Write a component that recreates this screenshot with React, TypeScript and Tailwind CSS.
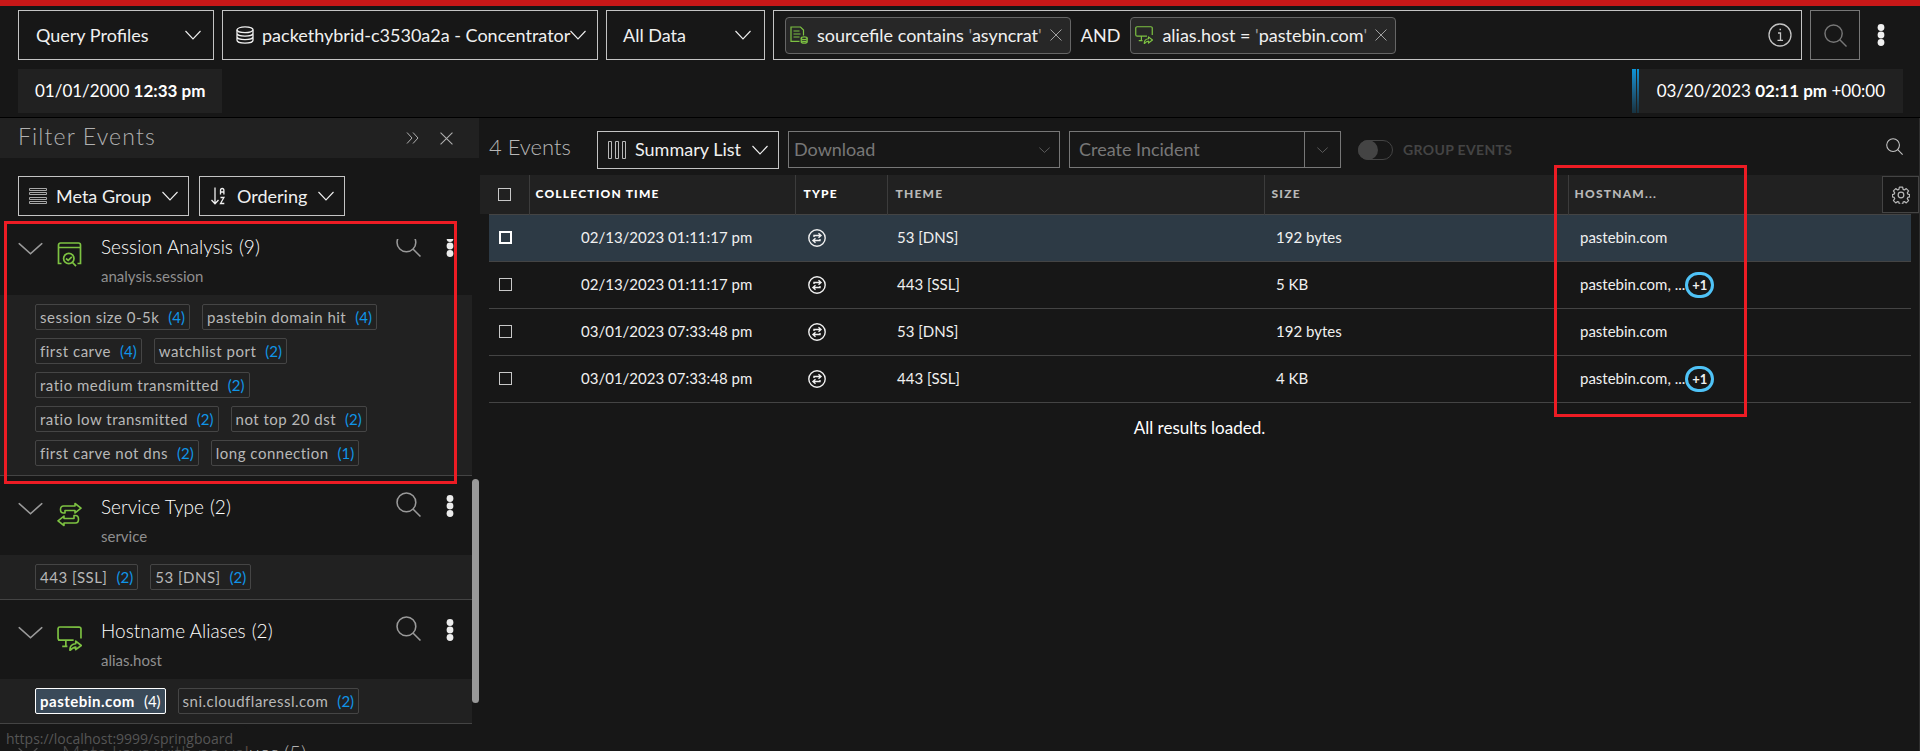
import type { ReactNode } from "react";

type IconProps = { className?: string };

const Chevron = ({ className = "w-4 h-[10px]" }: IconProps) => (
  <svg viewBox="0 0 16 10" preserveAspectRatio="none" className={`shrink-0 ${className}`} fill="none" stroke="currentColor" strokeWidth="1.1">
    <path d="M.5 1l7.500 8 7.500-8" />
  </svg>
);

const Close = ({ className = "w-3 h-3" }: IconProps) => (
  <svg viewBox="0 0 12 12" className={className} fill="none" stroke="currentColor" strokeWidth="1">
    <path d="M.5.5l11 11M11.5.5l-11 11" />
  </svg>
);

const Search = ({ className = "w-6 h-6" }: IconProps) => (
  <svg viewBox="0 0 24 24" className={className} fill="none" stroke="currentColor" strokeWidth="1.5">
    <circle cx="10" cy="10" r="9" />
    <path d="M16.5 16.5l7 7" />
  </svg>
);

const Dots = () => (
  <svg viewBox="0 0 8 22" className="w-2 h-[22px]" fill="currentColor">
    <circle cx="4" cy="3.5" r="3.4" />
    <circle cx="4" cy="11" r="3.4" />
    <circle cx="4" cy="18.5" r="3.4" />
  </svg>
);

const Database = () => (
  <svg viewBox="0 0 18 18" className="w-[18px] h-[18px] shrink-0" fill="none" stroke="currentColor" strokeWidth="1.3">
    <ellipse cx="9" cy="3.8" rx="8" ry="2.9" />
    <path d="M1 3.8v10.400c0 1.600 3.600 2.900 8 2.900s8-1.300 8-2.900V3.800M1 7.300c0 1.600 3.600 2.900 8 2.900s8-1.300 8-2.900M1 10.800c0 1.600 3.600 2.900 8 2.900s8-1.300 8-2.900" />
  </svg>
);

const SourceFile = () => (
  <svg viewBox="0 0 18 18" className="w-[18px] h-[18px]" fill="none" stroke="currentColor" strokeWidth="1.2">
    <path d="M9.500 15.400H1V1h9.500l3 3v5.500M3.500 5h6M3.500 8h7M3.500 11h6" />
    <ellipse cx="14.200" cy="12.200" rx="3" ry="1.300" />
    <path d="M11.200 12.200v3.600c0 .8 1.300 1.400 3 1.400s3-.6 3-1.400v-3.600M11.200 14.200c0 .7 1.300 1.200 3 1.200s3-.5 3-1.200" />
  </svg>
);

const HostAlias = ({ className = "w-[18px] h-[18px]" }: IconProps) => (
  <svg viewBox="0 0 24 24" className={className} fill="none" stroke="currentColor" strokeWidth="1.600" strokeLinejoin="round">
    <path d="M16 13.500H3a2 2 0 0 1-2-2V2.500A1.700 1.700 0 0 1 2.700 1h18.600A1.700 1.700 0 0 1 23 2.700v9.300M1 13.500h15M8.500 13.500v5.500M5 19.500h5" />
    <path d="M12.500 23.500c-.5-4 2-6.500 5.500-6.500v-2.500l5.300 4.200-5.300 4v-2.500c-2.500 0-3.500 1-5.500 3.300z" />
  </svg>
);

const SessionIcon = () => (
  <svg viewBox="0 0 25 25" className="w-[25px] h-[25px]" fill="none" stroke="currentColor" strokeWidth="1.700">
    <path d="M4.500 21.500H1.500V3A2 2 0 0 1 3.500 1h18A2 2 0 0 1 23.500 3v18.500h-3M1.500 5.500h22" />
    <circle cx="11.800" cy="16.500" r="5.200" />
    <path d="M15.500 20.500l3.500 3.700M9 16.500l2.200 1.900 3.600-3.600" />
  </svg>
);

const ServiceIcon = () => (
  <svg viewBox="0 0 25 25" className="w-[25px] h-[25px]" fill="none" stroke="currentColor" strokeWidth="1.600" strokeLinejoin="round">
    <path d="M8 11H6.500C2.500 11 2.500 4 6.500 4H18V1.500l6 4.700-6 4.700V8.500H8z" />
    <path d="M17 13.500h1.500c4 0 4 7.500 0 7.500H7v2.500l-6-4.700 6-4.700v2.400h10z" />
  </svg>
);

const NetworkEvent = () => (
  <svg viewBox="0 0 18 18" className="w-[18px] h-[18px]" fill="none" stroke="currentColor" strokeWidth="1.400">
    <circle cx="9" cy="9" r="8.200" />
    <path d="M6 8V6.500h6M10.500 4.300l2.500 2.200-2.500 2.200M12 10v1.500H6M7.500 9.300L5 11.500l2.500 2.200" strokeWidth="1.400" />
  </svg>
);

const Gear = () => (
  <svg viewBox="0 0 24 24" className="w-[18px] h-[18px]" fill="none" stroke="currentColor" strokeWidth="1.600" strokeLinejoin="round">
    <circle cx="12" cy="12" r="3.800" />
    <path d="M9.800 1.500h4.400l.6 3 1.600.7 2.600-1.700 3.100 3.100-1.700 2.600.7 1.600 2.400.6v3.200l-2.400.6-.7 1.600 1.700 2.600-3.100 3.100-2.600-1.700-1.600.7-.6 3H9.800l-.6-3-1.600-.7L5 22.500l-3.100-3.100 1.700-2.600-.7-1.600-2.400-.6v-3.200l2.400-.6.7-1.600L1.900 6.600 5 3.500l2.600 1.700 1.600-.7z" />
  </svg>
);

const groups = [
  {
    title: "Session Analysis",
    key: "analysis.session",
    icon: <SessionIcon />,
    values: [
      ["session size 0-5k", 4],
      ["pastebin domain hit", 4],
      ["first carve", 4],
      ["watchlist port", 2],
      ["ratio medium transmitted", 2],
      ["ratio low transmitted", 2],
      ["not top 20 dst", 2],
      ["first carve not dns", 2],
      ["long connection", 1],
    ],
    total: 9,
  },
  {
    title: "Service Type",
    key: "service",
    icon: <ServiceIcon />,
    values: [
      ["443 [SSL]", 2],
      ["53 [DNS]", 2],
    ],
    total: 2,
  },
  {
    title: "Hostname Aliases",
    key: "alias.host",
    icon: <HostAlias className="w-[25px] h-[25px]" />,
    values: [
      ["pastebin.com", 4],
      ["sni.cloudflaressl.com", 2],
    ],
    total: 2,
    selected: "pastebin.com",
  },
];

const events = [
  { time: "02/13/2023 01:11:17 pm", theme: "53 [DNS]", size: "192 bytes", more: false },
  { time: "02/13/2023 01:11:17 pm", theme: "443 [SSL]", size: "5 KB", more: true },
  { time: "03/01/2023 07:33:48 pm", theme: "53 [DNS]", size: "192 bytes", more: false },
  { time: "03/01/2023 07:33:48 pm", theme: "443 [SSL]", size: "4 KB", more: true },
];

const Check = ({ label, bright }: { label: string; bright?: boolean }) => (
  <input
    type="checkbox"
    aria-label={label}
    className={`block appearance-none w-[13px] h-[13px] ${bright ? "border-2 border-white" : "border border-[#c8c8c8]"}`}
  />
);

const Pill = ({ icon, children }: { icon: ReactNode; children: ReactNode }) => (
  <div className="flex items-center h-[37px] pl-1 pr-2 rounded border border-[#666] bg-[#272727] whitespace-nowrap">
    <span className="text-[#7dc242]">{icon}</span>
    <span className="ml-[9px]">{children}</span>
    <button aria-label="Remove filter" className="ml-2 text-[#a0a0a0]">
      <Close />
    </button>
  </div>
);

function QueryBar() {
  return (
    <header className="border-t-6 border-[#c81818] pl-[18px]">
      <div className="flex items-center gap-2 pt-1 whitespace-nowrap">
        <button className="flex items-center justify-between w-[196px] h-[50px] pl-[17px] pr-3 border border-[#c4c4c4]">
          Query Profiles
          <Chevron />
        </button>
        <button className="flex items-center w-[376px] h-[50px] pl-[13px] pr-[13px] border border-[#c4c4c4]">
          <Database />
          <span className="ml-2 mr-auto">packethybrid-c3530a2a - Concentrator</span>
          <Chevron />
        </button>
        <button className="flex items-center justify-between w-[159px] h-[50px] pl-4 pr-[13px] border border-[#c4c4c4]">
          All Data
          <Chevron />
        </button>
        <div className="flex flex-1 items-center h-[50px] pl-[11px] pr-[9px] border border-[#c4c4c4]">
          <Pill icon={<SourceFile />}>sourcefile contains <i className="not-italic text-[#999]">'</i>asyncrat<i className="not-italic text-[#999]">'</i></Pill>
          <span className="mx-[10px]">AND</span>
          <Pill icon={<HostAlias />}>alias.host = <i className="not-italic text-[#999]">'</i>pastebin.com<i className="not-italic text-[#999]">'</i></Pill>
          <button aria-label="Query info" className="ml-auto text-[#c4c4c4]">
            <svg viewBox="0 0 24 24" className="w-6 h-6" fill="none" stroke="currentColor" strokeWidth="1.300">
              <circle cx="12" cy="12" r="11" />
              <path d="M10 10h2.500v7M9.500 17.300h5.500M11.500 6.500h1.500" />
            </svg>
          </button>
        </div>
        <button aria-label="Run query" className="flex items-center justify-center w-[50px] h-[50px] border border-[#777] text-[#777]">
          <Search className="w-[23px] h-[23px]" />
        </button>
        <button aria-label="More" className="w-[52px] flex justify-center pr-[26px]">
          <Dots />
        </button>
      </div>
      <div className="flex justify-between pt-[9px] pr-[17px] pb-1 text-[17px] text-white">
        <div className="flex items-center h-[44px] px-[17px] bg-[#212121]">
          <span>01/01/2000 <b>12:33 pm</b></span>
        </div>
        <div className="flex items-center h-[44px] pr-[18px] bg-[#212121]">
          <div className="w-1 h-full bg-linear-to-b from-[#0a94d8] to-[#173240]" />
          <div className="w-[2px] h-full ml-px mr-[18px] bg-linear-to-b from-[#0a94d8] to-[#173240]" />
          <span>03/20/2023 <b>02:11 pm</b> +00:00</span>
        </div>
      </div>
    </header>
  );
}

function MetaGroup({ group }: { group: (typeof groups)[number] }) {
  return (
    <section className="border-b border-[#444]">
      <div className="flex h-[79px] pl-[18px] pr-[18px]">
        <button aria-label="Collapse" className="self-start mt-[26px] text-[#9a9a9a]">
          <Chevron className="w-[25px] h-[13px]" />
        </button>
        <span className="mt-[26px] ml-[14px] text-[#7dc242]">{group.icon}</span>
        <div className="ml-[19px] mt-[18px]">
          <h2 className="flex gap-[6px] text-[19px] leading-[26px] font-light text-white">
            {group.title}
            <span>({group.total})</span>
          </h2>
          <p className="mt-[6px] text-[15px] leading-5 text-[#8f8f8f]">{group.key}</p>
        </div>
        <button aria-label={"Search " + group.title} className="self-start mt-4 ml-auto text-[#9a9a9a]">
          <Search className="w-[25px] h-[25px]" />
        </button>
        <button aria-label="Options" className="self-start mt-[19px] ml-[25px] text-[#ececec]">
          <Dots />
        </button>
      </div>
      <div className="flex flex-wrap gap-x-3 gap-y-2 py-[9px] pl-[35px] pr-9 bg-[#212121]">
        {group.values.map(([name, count]) => {
          const active = group.selected === name;
          return (
            <button
              key={name}
              className={`flex items-center gap-[9px] h-[26px] px-1 rounded-[2px] border text-[15px] tracking-[0.5px] ${
                active ? "border-white bg-[#3a4a59] text-white font-bold" : "border-[#454545] text-[#b8b8b8]"
              }`}
            >
              {name}
              <span className={active ? "font-normal tracking-normal" : "text-[#1095e8] tracking-normal"}>({count})</span>
            </button>
          );
        })}
      </div>
    </section>
  );
}

function FilterPanel() {
  return (
    <aside className="relative flex flex-col w-[480px] shrink-0 min-h-0">
      <div className="flex items-center h-10 w-[479px] pl-[18px] pr-[26px] bg-[#212121] text-[#b0b0b0]">
        <h1 className="text-[23px] leading-9 pb-1 font-light tracking-wider">Filter Events</h1>
        <button aria-label="Expand panel" className="ml-auto">
          <svg viewBox="0 0 13 12" className="w-[13px] h-3" fill="none" stroke="currentColor">
            <path d="M1 .5L6 6l-5 5.500M7 .5L12 6l-5 5.500" />
          </svg>
        </button>
        <button aria-label="Close panel" className="ml-[21px]">
          <Close className="w-[13px] h-[13px]" />
        </button>
      </div>
      <div className="flex gap-[10px] pt-[18px] pl-[18px] pb-[23px]">
        <button className="flex items-center w-[171px] h-10 px-[10px] border border-[#c4c4c4]">
          <svg viewBox="0 0 18 18" className="w-[18px] h-[18px]" fill="none" stroke="#a8a8a8">
            <path d="M.5 1.500h17v2H.5zM.5 5.500h17v2H.5zM.5 10.500h17v2H.5zM.5 14.500h17v2H.5z" />
          </svg>
          <span className="ml-[9px] mr-auto">Meta Group</span>
          <Chevron />
        </button>
        <button className="flex items-center w-[146px] h-10 px-[10px] border border-[#c4c4c4]">
          <svg viewBox="0 0 18 18" className="w-[18px] h-[18px]" fill="none" stroke="currentColor" strokeWidth="1.300">
            <path d="M5 .5v16M1.500 13L5 16.700 8.500 13M10.500 7.500V3.500q0-2 1.700-2t1.700 2v4M10.500 5h3.400M10.500 10.500h3.400l-3.400 6h3.800" />
          </svg>
          <span className="ml-[9px] mr-auto">Ordering</span>
          <Chevron />
        </button>
      </div>
      <div className="flex-1 min-h-0 overflow-hidden w-[472px]">
        {/* list is scrolled a little, first header is cut */}
        <div className="-mt-[23px]">
          {groups.map((g) => (
            <MetaGroup key={g.key} group={g} />
          ))}
          <div className="flex items-center gap-6 pt-3 pl-[18px] text-[20px] leading-8 font-light text-[#b0b0b0]">
            <Chevron className="w-5 h-[11px]" />
            Meta keys with no values (5)
          </div>
        </div>
      </div>
      <div className="absolute right-px top-[361px] w-[7px] h-[224px] rounded bg-[#999]" />
      <a href="https://localhost:9999/springboard" className="absolute left-0 bottom-0 h-[25px] w-[247px] pl-[6px] rounded-tr bg-[#181818a0] font-['Open_Sans',sans-serif] text-sm leading-[25px] text-[#555]">
        https://localhost:9999/springboard
      </a>
      {/* session highlight */}
      <div className="absolute pointer-events-none left-1 top-[103px] w-[453px] h-[263px] border-3 border-[#ed1c24]" />
    </aside>
  );
}

function EventsTable() {
  const thText = "text-left text-[12px] font-black tracking-widest";
  const th = `${thText} border-r border-[#3c3c3c]`;
  return (
    <div className="relative">
      <table className="w-full table-fixed border-collapse">
        <colgroup>
          <col className="w-[9px]" />
          <col className="w-[40px]" />
          <col className="w-[266px]" />
          <col className="w-[92px]" />
          <col className="w-[377px]" />
          <col className="w-[304px]" />
          <col />
          <col className="w-[8px]" />
        </colgroup>
        <thead>
          <tr className="h-[39px] bg-[#212121] text-[#b8b8b8]">
            <td />
            <th className={`${th} pl-[9px]`}><Check label="Select all events" /></th>
            <th className={`${th} pl-[6px] text-white`}>COLLECTION TIME</th>
            <th className={`${th} pl-2 text-white`}>TYPE</th>
            <th className={`${th} pl-2`}>THEME</th>
            <th className={`${th} pl-[7px]`}>SIZE</th>
            <th className={`${thText} pl-[6px]`}>HOSTNAM...</th>
            <td />
          </tr>
        </thead>
        <tbody className="text-[15px] text-[#f0f0f0]">
          {events.map((e, i) => {
            const td = `border-y border-[#444] ${i === 0 ? "bg-[#2d3a45]" : ""}`;
            return (
              <tr key={i} className="h-[47px]">
                <td />
                <td className={`${td} pl-[10px]`}><Check label={`Select event ${i + 1}`} bright={i === 0} /></td>
                <td className={`${td} pl-[52px]`}>{e.time}</td>
                <td className={`${td} pl-[13px]`}><NetworkEvent /></td>
                <td className={`${td} pl-[10px]`}>{e.theme}</td>
                <td className={`${td} pl-3`}>{e.size}</td>
                <td className={`${td} pl-3`}>
                  <div className="flex items-center">
                    {e.more ? "pastebin.com, ..." : "pastebin.com"}
                    {e.more && (
                      <button className="w-[29px] h-[26px] rounded-[13px] border-3 border-[#4fc3f7] text-[13px] leading-5 font-bold">+1</button>
                    )}
                  </div>
                </td>
                <td />
              </tr>
            );
          })}
        </tbody>
      </table>
      <button aria-label="Column settings" className="absolute right-0 top-px flex items-center justify-center w-[37px] h-[37px] border border-[#444] bg-[#171717] text-[#b8b8b8]">
        <Gear />
      </button>
      {/* hostname highlight */}
      <div className="absolute pointer-events-none left-[1074px] -top-[10px] w-[193px] h-[252px] border-3 border-[#ed1c24]" />
    </div>
  );
}

function EventsPanel() {
  return (
    <main className="flex-1 min-w-0 border-r border-[#2e2e2e]">
      <div className="flex items-center h-[57px] pt-3 pb-[6px] pl-[9px] pr-4">
        <h2 className="w-[108px] pb-[6px] text-[22px] font-light text-[#b8b8b8]">4 Events</h2>
        <button className="flex items-center w-[182px] h-[38px] px-[10px] border border-[#c4c4c4]">
          <svg viewBox="0 0 18 18" className="w-[18px] h-[18px]" fill="none" stroke="#b8b8b8">
            <path d="M.5.5h3v17h-3zM7.500.5h3v17h-3zM14.500.5h3v17h-3z" />
          </svg>
          <span className="ml-[9px] mr-auto">Summary List</span>
          <Chevron />
        </button>
        <button disabled className="flex items-center justify-between w-[272px] h-[37px] ml-[9px] pl-[5px] pr-[9px] border border-[#777] text-[#777]">
          Download
          <Chevron className="w-[11px] h-[6px]" />
        </button>
        <button disabled className="w-[236px] h-[37px] ml-[9px] pl-[9px] text-left border border-[#777] text-[#777]">
          Create Incident
        </button>
        <button disabled aria-label="Incident options" className="flex items-center justify-center w-9 h-[37px] border border-l-0 border-[#777] text-[#777]">
          <Chevron className="w-[11px] h-[6px]" />
        </button>
        <label className="flex items-center ml-[17px] text-sm font-bold tracking-wide text-[#444]">
          <input type="checkbox" role="switch" disabled className="sr-only" />
          <span className="w-[35px] h-5 mr-[10px] rounded-full border border-[#444]">
            <span className="block -ml-px -mt-px w-5 h-5 rounded-full bg-[#444]" />
          </span>
          GROUP EVENTS
        </label>
        <button aria-label="Search events" className="ml-auto pb-[6px] text-[#c4c4c4]">
          <Search className="w-[17px] h-[17px]" />
        </button>
      </div>
      <EventsTable />
      <p className="pt-3 text-center text-[17px] text-white">All results loaded.</p>
    </main>
  );
}

export default function App() {
  return (
    <div className="flex flex-col h-screen overflow-hidden bg-[#171717] font-['Lato',sans-serif] text-[18px] text-[#f0f0f0]">
      <QueryBar />
      <div className="flex flex-1 min-h-0 border-t border-black">
        <FilterPanel />
        <EventsPanel />
      </div>
    </div>
  );
}
